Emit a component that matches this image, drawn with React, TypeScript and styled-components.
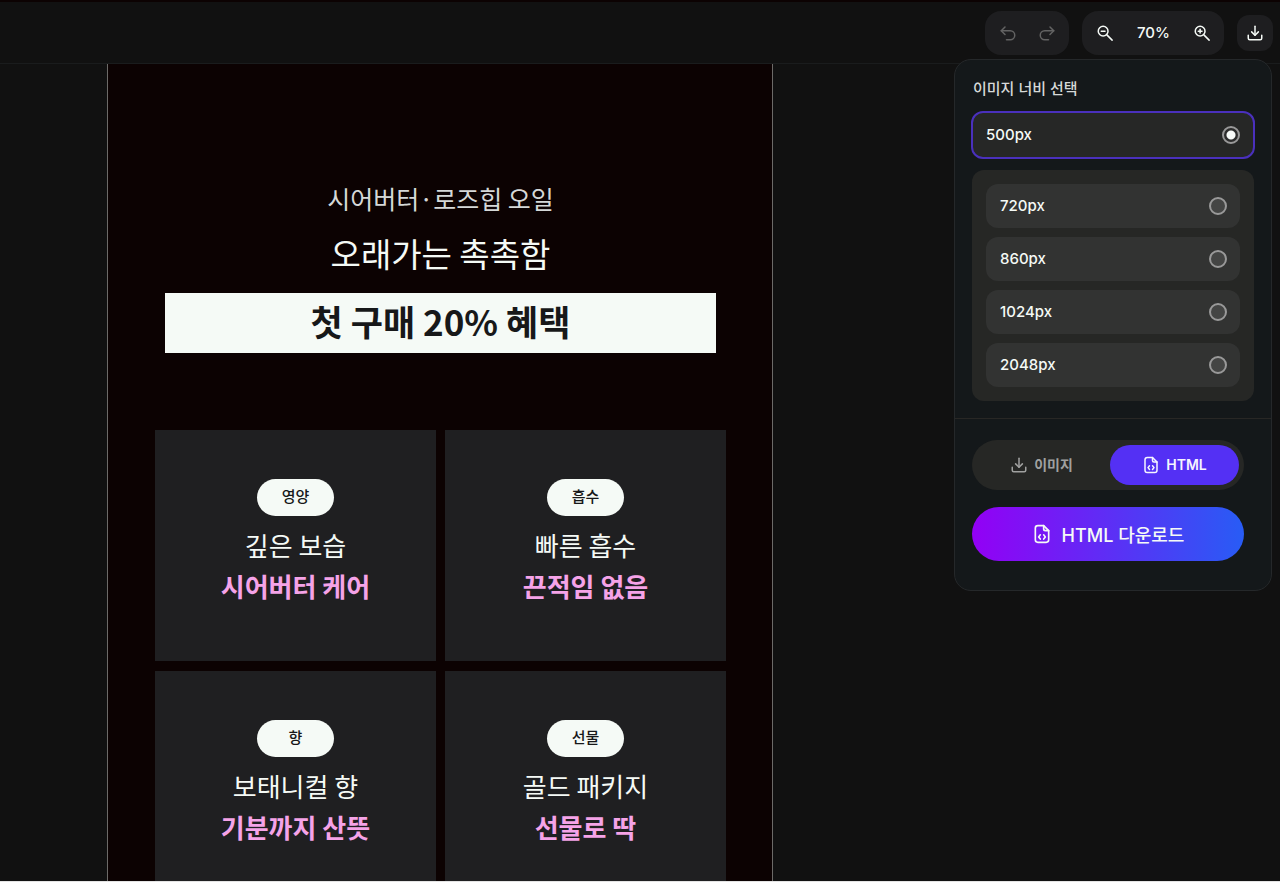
import React, { useState } from 'react';
import styled, { createGlobalStyle, css } from 'styled-components';

const GlobalStyle = createGlobalStyle`
  *, *::before, *::after { box-sizing: border-box; }
  body {
    margin: 0;
    background: #111111;
    color: #f5faf6;
    font-family: Inter, 'Noto Sans CJK KR', sans-serif;
  }
  button { font: inherit; color: inherit; border: 0; cursor: pointer; }
  h1, h2, p { margin: 0; font-weight: 400; }
`;

const Page = styled.div`
  display: flex;
  flex-direction: column;
  height: 100vh;
  border-top: 2px solid #0c0202;
  border-bottom: 1px solid #e4e4e4;
`;

const Header = styled.header`
  flex: none;
  display: flex;
  align-items: center;
  justify-content: flex-end;
  gap: 13px;
  height: 62px;
  padding: 0 7px;
  border-bottom: 1px solid #1a1c1d;
`;

const ToolGroup = styled.div<{ $wide?: boolean }>`
  display: flex;
  align-items: center;
  justify-content: space-between;
  width: ${(p) => (p.$wide ? 142 : 84)}px;
  height: 44px;
  padding: 0 10px 0 11px;
  border-radius: 16px;
  background: #1e1e20;
`;

const IconButton = styled.button`
  display: grid;
  place-items: center;
  width: 24px;
  height: 24px;
  padding: 0;
  background: none;
  &:disabled { color: #636363; cursor: default; }
`;

const ZoomValue = styled.output`
  font-size: 15px;
  font-weight: 500;
  line-height: 24px;
`;

const ExportMenu = styled.div`
  position: relative;
`;

const ExportButton = styled.button`
  display: grid;
  place-items: center;
  width: 36px;
  height: 36px;
  padding: 0;
  border-radius: 12px;
  background: #1e1e20;
`;

const Popover = styled.section`
  position: absolute;
  z-index: 1;
  top: calc(100% + 8px);
  right: 1px;
  width: 318px;
  border: 1px solid #25282a;
  border-radius: 17px;
  background: #14181a;
`;

const WidthSection = styled.fieldset`
  display: flex;
  flex-direction: column;
  min-width: 0;
  margin: 0;
  border: 0;
  padding: 17px 16px 17px;
`;

const WidthTitle = styled.legend`
  float: left;
  margin-bottom: 10px;
  padding: 0 2px;
  color: #d6d9d8;
  font-size: 15px;
  font-weight: 500;
  line-height: 24px;
`;

const Option = styled.label<{ $featured?: boolean }>`
  display: flex;
  align-items: center;
  justify-content: space-between;
  height: 44px;
  padding: 0 13px 0 14px;
  border-radius: 12px;
  background: #323332;
  font-size: 15px;
  font-weight: 500;
  cursor: pointer;
  ${(p) =>
    p.$featured &&
    css`
      height: 48px;
      padding: 0 13px;
      border: 2px solid #4a30bd;
      background: #262726;
    `}
`;

const Radio = styled.input`
  appearance: none;
  width: 18px;
  height: 18px;
  margin: 0;
  border: 2px solid #999999;
  border-radius: 50%;
  background: #444544;
  &:checked {
    background: radial-gradient(circle, #f8fbf9 4px, #2c2c2c 5px);
  }
`;

const OptionGroup = styled.div`
  display: flex;
  flex-direction: column;
  gap: 9px;
  margin: 11px 1px 0;
  padding: 14px;
  border-radius: 12px;
  background: #262725;
`;

const FormatSection = styled.div`
  display: flex;
  flex-direction: column;
  gap: 17px;
  padding: 21px 27px 29px 17px;
  border-top: 1px solid #282725;
`;

const FormatTabs = styled.div`
  display: flex;
  gap: 4px;
  height: 50px;
  padding: 5px;
  border-radius: 25px;
  background: #262725;
`;

const FormatTab = styled.button<{ $active: boolean }>`
  flex: 1;
  display: flex;
  align-items: center;
  justify-content: center;
  gap: 6px;
  padding: 0;
  border-radius: 20px;
  background: ${(p) => (p.$active ? '#5430f4' : 'transparent')};
  color: ${(p) => (p.$active ? '#f5f5ff' : '#a0a1a0')};
  font-size: 14px;
  font-weight: 600;
  line-height: 20px;
`;

const DownloadButton = styled.button`
  display: flex;
  align-items: center;
  justify-content: center;
  gap: 10px;
  height: 54px;
  padding: 0;
  border-radius: 27px;
  background: linear-gradient(90deg, #9300f5, #285cf5);
  font-size: 18px;
  font-weight: 500;
`;

const Workspace = styled.main`
  flex: 1;
  min-height: 0;
  display: flex;
  justify-content: center;
  padding-right: 400px;
  overflow: hidden;
`;

const Artboard = styled.article`
  width: 666px;
  height: max-content;
  padding: 112px 46px 47px 47px;
  border: solid #6c6a68;
  border-width: 0 1px;
  background: #0c0202;
  font-family: 'Noto Sans CJK KR', sans-serif;
  text-align: center;
`;

const Eyebrow = styled.p`
  color: #d5d8d8;
  font-size: 25px;
  line-height: 44px;
`;

const Headline = styled.h1`
  font-size: 33px;
  line-height: 66px;
`;

const Offer = styled.p`
  margin: 7px 10px 77px;
  padding-bottom: 4px;
  background: #f5faf6;
  color: #171819;
  font-size: 35px;
  font-weight: 700;
  line-height: 56px;
`;

const CardGrid = styled.div`
  display: grid;
  grid-template-columns: 1fr 1fr;
  gap: 10px 9px;
`;

const Card = styled.section`
  display: flex;
  flex-direction: column;
  align-items: center;
  height: 231px;
  padding-top: 49px;
  background: #1f1f21;
`;

const Badge = styled.span`
  width: 77px;
  margin-bottom: 9px;
  padding-bottom: 3px;
  border-radius: 19px;
  background: #f5faf6;
  color: #171819;
  font-size: 15px;
  font-weight: 500;
  line-height: 34px;
`;

const CardTitle = styled.h2`
  font-size: 26px;
  line-height: 40px;
`;

const CardAccent = styled.p`
  color: #f5a3e8;
  font-size: 26px;
  font-weight: 700;
  line-height: 42px;
`;

type IconProps = { size?: number; children: React.ReactNode };

const Icon = ({ size = 18, children }: IconProps) => (
  <svg
    width={size}
    height={size}
    viewBox="0 0 24 24"
    fill="none"
    stroke="currentColor"
    strokeWidth={2}
    strokeLinecap="round"
    strokeLinejoin="round"
    aria-hidden="true"
  >
    {children}
  </svg>
);

const UndoIcon = () => (
  <Icon>
    <path d="M8 4 3 9l5 5" />
    <path d="M3 9h12a6 6 0 0 1 0 12h-5" />
  </Icon>
);

const RedoIcon = () => (
  <Icon>
    <path d="m16 4 5 5-5 5" />
    <path d="M21 9H9a6 6 0 0 0 0 12h5" />
  </Icon>
);

const Magnifier = ({ plus }: { plus?: boolean }) => (
  <Icon>
    <circle cx="9.5" cy="9.5" r="6.5" />
    <path d="m14.500 14.500 7 7" />
    <path d="M7 9.500h5" />
    {plus && <path d="M9.500 7v5" />}
  </Icon>
);

const DownloadIcon = ({ size }: { size: number }) => (
  <Icon size={size}>
    <path d="M12 3v12" />
    <path d="m7.5 10.5 4.5 4.5 4.5-4.5" />
    <path d="M3 15v4a2 2 0 0 0 2 2h14a2 2 0 0 0 2-2v-4" />
  </Icon>
);

const HtmlFileIcon = ({ size }: { size: number }) => (
  <Icon size={size}>
    <path d="M14 2H7a3 3 0 0 0-3 3v14a3 3 0 0 0 3 3h10a3 3 0 0 0 3-3V8z" />
    <path d="M14 2v4a2 2 0 0 0 2 2h4" />
    <path d="m10 13-2 2.500 2 2.500" />
    <path d="m14 13 2 2.500-2 2.500" />
  </Icon>
);

const widths = [720, 860, 1024, 2048];

const cards = [
  { badge: '영양', title: '깊은 보습', accent: '시어버터 케어' },
  { badge: '흡수', title: '빠른 흡수', accent: '끈적임 없음' },
  { badge: '향', title: '보태니컬 향', accent: '기분까지 산뜻' },
  { badge: '선물', title: '골드 패키지', accent: '선물로 딱' },
];

export default function App() {
  const [width, setWidth] = useState(500);
  const [format, setFormat] = useState<'image' | 'html'>('html');

  const renderOption = (value: number, featured = false) => (
    <Option key={value} $featured={featured}>
      {value}px
      <Radio
        type="radio"
        name="image-width"
        value={value}
        checked={width === value}
        onChange={() => setWidth(value)}
      />
    </Option>
  );

  return (
    <>
      <GlobalStyle />
      <Page>
        <Header>
          <ToolGroup>
            <IconButton disabled aria-label="실행 취소"><UndoIcon /></IconButton>
            <IconButton disabled aria-label="다시 실행"><RedoIcon /></IconButton>
          </ToolGroup>
          <ToolGroup $wide>
            <IconButton aria-label="축소"><Magnifier /></IconButton>
            <ZoomValue>70%</ZoomValue>
            <IconButton aria-label="확대"><Magnifier plus /></IconButton>
          </ToolGroup>
          <ExportMenu>
            <ExportButton aria-label="다운로드" aria-expanded="true">
              <DownloadIcon size={18} />
            </ExportButton>
            <Popover>
              <WidthSection>
                <WidthTitle>이미지 너비 선택</WidthTitle>
                {renderOption(500, true)}
                <OptionGroup>{widths.map((value) => renderOption(value))}</OptionGroup>
              </WidthSection>
              <FormatSection>
                <FormatTabs>
                  <FormatTab
                    $active={format === 'image'}
                    aria-pressed={format === 'image'}
                    onClick={() => setFormat('image')}
                  >
                    <DownloadIcon size={18} />
                    이미지
                  </FormatTab>
                  <FormatTab
                    $active={format === 'html'}
                    aria-pressed={format === 'html'}
                    onClick={() => setFormat('html')}
                  >
                    <HtmlFileIcon size={18} />
                    HTML
                  </FormatTab>
                </FormatTabs>
                <DownloadButton>
                  <HtmlFileIcon size={20} />
                  HTML 다운로드
                </DownloadButton>
              </FormatSection>
            </Popover>
          </ExportMenu>
        </Header>
        <Workspace>
          <Artboard>
            <Eyebrow>시어버터·로즈힙 오일</Eyebrow>
            <Headline>오래가는 촉촉함</Headline>
            <Offer>첫 구매 20% 혜택</Offer>
            <CardGrid>
              {cards.map((card) => (
                <Card key={card.badge}>
                  <Badge>{card.badge}</Badge>
                  <CardTitle>{card.title}</CardTitle>
                  <CardAccent>{card.accent}</CardAccent>
                </Card>
              ))}
            </CardGrid>
          </Artboard>
        </Workspace>
      </Page>
    </>
  );
}
